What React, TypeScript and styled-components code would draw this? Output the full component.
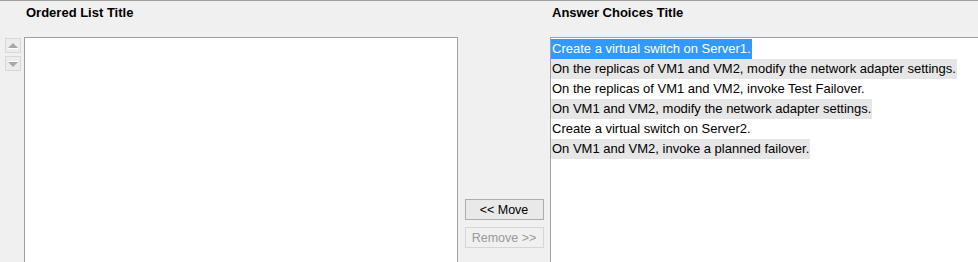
import React from "react";
import styled, { createGlobalStyle } from "styled-components";

const Global = createGlobalStyle`
  html, body { margin: 0; padding: 0; background: #f0f0f0; }
  body { font-family: "Liberation Sans", Arial, sans-serif; overflow: hidden; }
`;

const Panel = styled.div`
  border-top: 1px solid #a0a0a0;
  background: #f0f0f0;
  display: grid;
  grid-template-columns: 24px 434px 92px 1fr;
  grid-template-rows: 36px auto;
  height: 261px;
  overflow: hidden;
`;

const Title = styled.div<{ $col: number }>`
  grid-column: ${(p) => p.$col};
  grid-row: 1;
  font-size: 13px;
  font-weight: bold;
  color: #000;
  padding: 4px 0 0 2px;
`;

const Arrows = styled.div`
  grid-column: 1;
  grid-row: 2;
  display: flex;
  flex-direction: column;
  align-items: flex-start;
  gap: 3px;
  padding: 1px 0 0 5px;
`;

const ArrowBtn = styled.div`
  width: 14px;
  height: 13px;
  border: 1px solid #d8d8d8;
  background: #ececec;
  display: flex;
  align-items: center;
  justify-content: center;
`;

const ListBox = styled.div<{ $col: number; $open?: boolean }>`
  grid-column: ${(p) => p.$col};
  grid-row: 2;
  background: #fff;
  border: 1px solid #a0a0a0;
  ${(p) => (p.$open ? "border-right: none;" : "")}
  height: 360px;
  padding: 1px 0 0 0;
  display: flex;
  flex-direction: column;
  align-items: flex-start;
`;

const Item = styled.div<{ $kind: "sel" | "alt" | "plain" }>`
  font-size: 13px;
  line-height: 20px;
  height: 20px;
  padding: 0 1px 0 1px;
  white-space: nowrap;
  color: ${(p) => (p.$kind === "sel" ? "#fff" : "#000")};
  background: ${(p) =>
    p.$kind === "sel" ? "#3399ff" : p.$kind === "alt" ? "#e6e6e6" : "transparent"};
`;

const Middle = styled.div`
  grid-column: 3;
  grid-row: 2;
  display: flex;
  flex-direction: column;
  align-items: center;
  gap: 7px;
  padding-top: 162px;
`;

const Btn = styled.div<{ $disabled?: boolean }>`
  width: 77px;
  height: 19px;
  border: 1px solid ${(p) => (p.$disabled ? "#d6d6d6" : "#adadad")};
  background: ${(p) => (p.$disabled ? "#f0f0f0" : "#e9e9e9")};
  color: ${(p) => (p.$disabled ? "#9a9a9a" : "#000")};
  font-size: 12.5px;
  display: flex;
  align-items: center;
  justify-content: center;
`;

const items: { text: string; kind: "sel" | "alt" | "plain" }[] = [
  { text: "Create a virtual switch on Server1.", kind: "sel" },
  { text: "On the replicas of VM1 and VM2, modify the network adapter settings.", kind: "alt" },
  { text: "On the replicas of VM1 and VM2, invoke Test Failover.", kind: "plain" },
  { text: "On VM1 and VM2, modify the network adapter settings.", kind: "alt" },
  { text: "Create a virtual switch on Server2.", kind: "plain" },
  { text: "On VM1 and VM2, invoke a planned failover.", kind: "alt" },
];

export default function App() {
  return (
    <>
      <Global />
      <Panel>
        <Title $col={2}>Ordered List Title</Title>
        <Title $col={4}>Answer Choices Title</Title>
        <Arrows>
          <ArrowBtn>
            <svg width="10" height="6" viewBox="0 0 10 6">
              <polygon points="5,0 10,5 0,5" fill="#a8a8a8" />
              <rect x="0" y="5" width="10" height="1" fill="#fff" />
            </svg>
          </ArrowBtn>
          <ArrowBtn>
            <svg width="10" height="6" viewBox="0 0 10 6">
              <rect x="0" y="0" width="10" height="1" fill="#fff" />
              <polygon points="0,1 10,1 5,6" fill="#a8a8a8" />
            </svg>
          </ArrowBtn>
        </Arrows>
        <ListBox $col={2} />
        <Middle>
          <Btn>&lt;&lt; Move</Btn>
          <Btn $disabled>Remove &gt;&gt;</Btn>
        </Middle>
        <ListBox $col={4} $open>
          {items.map((it, i) => (
            <Item key={i} $kind={it.kind}>
              {it.text}
            </Item>
          ))}
        </ListBox>
      </Panel>
    </>
  );
}
